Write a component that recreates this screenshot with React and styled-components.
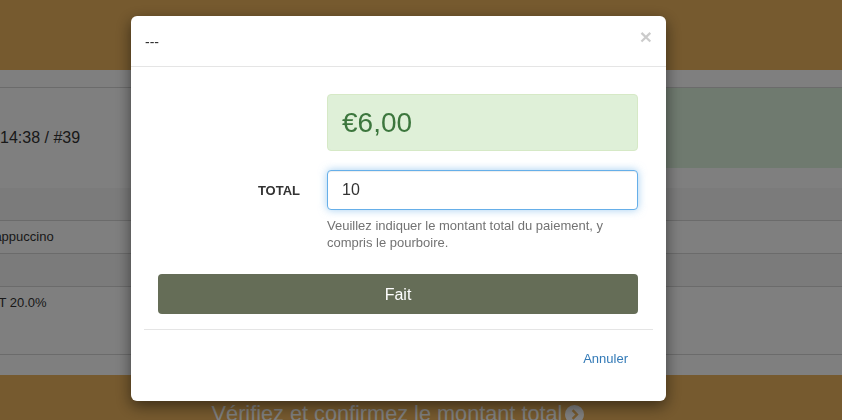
import React from "react"
import styled, { createGlobalStyle } from "styled-components"

const GlobalStyle = createGlobalStyle`
  html, body {
    margin: 0;
    padding: 0;
  }
  body {
    font-family: "Liberation Sans", Arial, sans-serif;
    font-size: 14px;
    color: #333;
    background: #fff;
    overflow: hidden;
  }
  * { box-sizing: border-box; }
`

const Page = styled.div`
  height: 420px;
  overflow: hidden;
  display: flex;
  flex-direction: column;
`

const TopBar = styled.header`
  height: 70px;
  flex: none;
  background: #ecb45e;
`

const Main = styled.main`
  flex: none;
  height: 305px;
  background: #fff;
`

const Strip = styled.div`
  height: 18px;
  border-bottom: 1px solid #d6d6d6;
`

const InfoRow = styled.div`
  display: grid;
  grid-template-columns: 1fr 1fr;
  height: 100px;
`

const OrderRef = styled.div`
  display: flex;
  align-items: center;
  font-size: 16px;
  color: #333;
`

const PaidBox = styled.div`
  height: 80px;
  background: #def4de;
`

const TableRow = styled.div`
  height: ${p => p.$h}px;
  background: ${p => (p.$band ? "#f6f6f6" : "#fff")};
  border-bottom: 1px solid #d6d6d6;
  padding: ${p => (p.$top ? "7px 0 0" : "0")};
  display: flex;
  align-items: ${p => (p.$top ? "flex-start" : "center")};
  font-size: 13px;
  line-height: 18px;
  overflow: hidden;
  white-space: nowrap;
`

const CutText = styled.span`
  margin-left: ${p => p.$cut}px;
`

const BottomBar = styled.footer`
  flex: 1;
  background: #ecb45e;
  display: flex;
  justify-content: center;
  align-items: flex-start;
  gap: 3px;
  padding: 26px 46px 0 0;
  color: #fff;
  font-size: 21.7px;
  line-height: 26px;
  white-space: nowrap;
`

const NextIcon = styled.svg`
  flex: none;
  width: 19px;
  height: 19px;
  margin-top: 4px;
`

const Backdrop = styled.div`
  position: fixed;
  inset: 0;
  background: rgba(0, 0, 0, 0.5);
`

const Dialog = styled.div`
  position: fixed;
  top: 16px;
  left: 131px;
  width: 535px;
  height: 385px;
  background: #fff;
  border-radius: 6px;
  box-shadow: 0 5px 15px rgba(0, 0, 0, 0.5);
  display: flex;
  flex-direction: column;
`

const DialogHeader = styled.div`
  height: 51px;
  padding: 15px 14px 0 14px;
  border-bottom: 1px solid #e5e5e5;
  display: flex;
  justify-content: space-between;
  align-items: flex-start;
`

const Title = styled.h4`
  margin: 0;
  font-size: 14px;
  font-weight: normal;
  line-height: 22px;
  color: #333;
`

const Close = styled.button`
  border: 0;
  background: none;
  padding: 0;
  margin-top: -5px;
  font-family: "Liberation Sans", Arial, sans-serif;
  font-size: 21px;
  font-weight: bold;
  line-height: 1;
  color: #000;
  opacity: 0.2;
`

const DialogBody = styled.div`
  padding: 27px 28px 15px 27px;
  display: flex;
  flex-direction: column;
`

const FormGrid = styled.div`
  display: grid;
  grid-template-columns: 1fr 311px;
  column-gap: 27px;
  align-items: center;
`

const AmountBox = styled.div`
  grid-column: 2;
  height: 57px;
  background: #dff0d8;
  border: 1px solid #d6e9c6;
  border-radius: 4px;
  color: #3c763d;
  font-size: 28px;
  display: flex;
  align-items: center;
  padding: 0 14px;
  margin-bottom: 19px;
`

const Label = styled.label`
  text-align: right;
  font-weight: bold;
  font-size: 13px;
  color: #333;
`

const Input = styled.input`
  height: 40px;
  width: 100%;
  border: 1px solid #66afe9;
  border-radius: 4px;
  outline: 0;
  padding: 0 14px;
  font-family: "Liberation Sans", Arial, sans-serif;
  font-size: 16px;
  color: #333;
  box-shadow: inset 0 1px 1px rgba(0, 0, 0, 0.075), 0 0 8px rgba(102, 175, 233, 0.6);
`

const Help = styled.p`
  grid-column: 2;
  margin: 7px 0 0;
  font-size: 13px;
  line-height: 17px;
  color: #737373;
`

const DoneButton = styled.button`
  margin-top: 23px;
  height: 40px;
  border: 0;
  border-radius: 4px;
  background: #656d57;
  color: #fff;
  font-family: "Liberation Sans", Arial, sans-serif;
  font-size: 16px;
  padding-top: 2px;
`

const DialogFooter = styled.div`
  margin: 0 13px;
  border-top: 1px solid #e5e5e5;
  padding: 20px 25px 0 0;
  display: flex;
  justify-content: flex-end;
`

const CancelLink = styled.a`
  color: #337ab7;
  font-size: 13px;
  line-height: 18px;
  text-decoration: none;
`

export default function App() {
  return (
    <>
      <GlobalStyle />
      <Page>
        <TopBar />
        <Main>
          <Strip />
          <InfoRow>
            <OrderRef>14:38 / #39</OrderRef>
            <PaidBox />
          </InfoRow>
          <TableRow $h={33} $band />
          <TableRow $h={33}>
            <CutText $cut={-15}>Cappuccino</CutText>
          </TableRow>
          <TableRow $h={33} $band />
          <TableRow $h={68} $top>
            <CutText $cut={-17}>VAT 20.0%</CutText>
          </TableRow>
        </Main>
        <BottomBar>
          <span>Vérifiez et confirmez le montant total</span>
          <NextIcon viewBox="0 0 20 20">
            <circle cx="10" cy="10" r="10" fill="#fff" />
            <path d="M8 5.5 L12.5 10 L8 14.5" fill="none" stroke="#ecb45e" strokeWidth="2.6" />
          </NextIcon>
        </BottomBar>
      </Page>
      <Backdrop />
      <Dialog>
        <DialogHeader>
          <Title>---</Title>
          <Close aria-label="Fermer">×</Close>
        </DialogHeader>
        <DialogBody>
          <FormGrid>
            <AmountBox>€6,00</AmountBox>
            <Label htmlFor="total">TOTAL</Label>
            <Input id="total" defaultValue="10" autoFocus />
            <Help>Veuillez indiquer le montant total du paiement, y compris le pourboire.</Help>
          </FormGrid>
          <DoneButton>Fait</DoneButton>
        </DialogBody>
        <DialogFooter>
          <CancelLink href="#">Annuler</CancelLink>
        </DialogFooter>
      </Dialog>
    </>
  )
}
